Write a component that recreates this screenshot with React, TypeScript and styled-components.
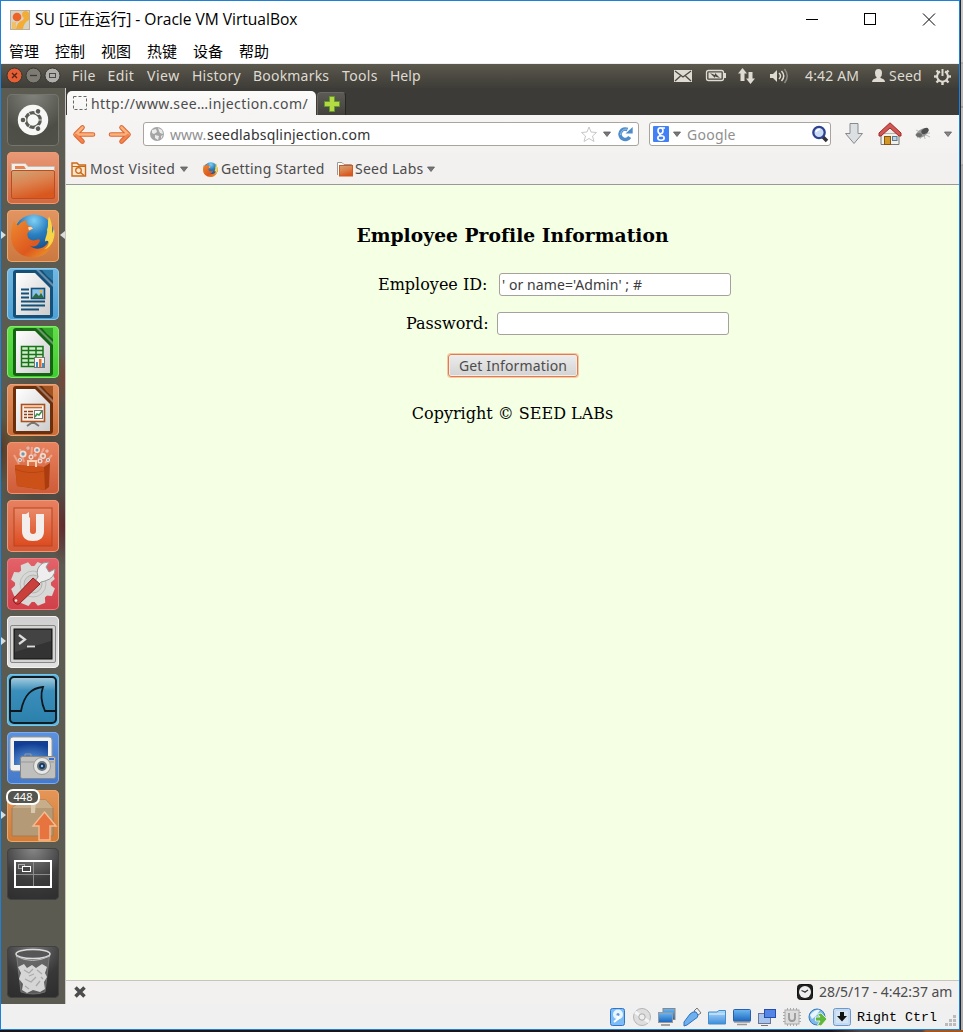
import React from "react";
import styled, { createGlobalStyle } from "styled-components";

const UI = '"Noto Sans", "Open Sans", sans-serif';

const Global = createGlobalStyle`
  * { box-sizing: border-box; }
  html, body { margin: 0; padding: 0; }
  body { width: 963px; height: 1032px; overflow: hidden; background: #17151b; }
  svg { display: block; flex: none; overflow: visible; }
`;

const Desktop = styled.div`
  display: flex;
  width: 963px;
  height: 1032px;
  background: linear-gradient(90deg, #18151a 0 830px, #4a4548 860px 922px, #a4561f 926px);
`;
const Window = styled.div`
  display: flex;
  flex-direction: column;
  width: 960px;
  height: 1030px;
  border: 1px solid #1c81d8;
  background: #fff;
`;
const Behind = styled.div`
  width: 3px;
  height: 1030px;
  border-left: 1px solid #25252b;
  background: linear-gradient(#c8c8c8 0 62px, #999 63px, #b9b9b9 64px 106px, #888 107px, #c0c0c0 108px 164px, #999 165px, #b0b0b0 166px);
`;

const TitleBar = styled.div`
  display: flex;
  align-items: center;
  height: 37px;
  padding-left: 9px;
  color: #000;
`;
const Caption = styled.span`
  margin: 0 0 3px 5px;
  width: 737px;
  white-space: nowrap;
  font-family: "Open Sans", "Noto Sans CJK SC", sans-serif;
  font-size: 15.6px;
  letter-spacing: -0.03px;
`;
const HostMenu = styled.div`
  display: flex;
  height: 26px;
  padding-left: 8px;
  border-bottom: 1px solid #eee;
`;
const HostMenuItem = styled.span`
  width: 46px;
  font: 15px/25px "Noto Sans CJK SC", sans-serif;
  color: #000;
  white-space: nowrap;
`;

const Txt = styled.span<{ $w: number; $ls?: number; $color?: string; $drop?: number }>`
  flex: none;
  width: ${(p) => p.$w}px;
  padding-top: ${(p) => p.$drop ?? 0}px;
  white-space: pre;
  font-family: ${UI};
  font-size: 14px;
  line-height: 20px;
  letter-spacing: ${(p) => p.$ls ?? 0}px;
  color: ${(p) => p.$color ?? "#4c4c4c"};
`;
const Gap = styled.span<{ $w: number }>`
  flex: none;
  width: ${(p) => p.$w}px;
`;

const TopPanel = styled.div`
  display: flex;
  align-items: center;
  height: 24px;
  padding-left: 5px;
  background: linear-gradient(#5c594e, #4a4840 55%, #3e3d38);
`;
const Guest = styled.div`
  display: flex;
  height: 916px;
`;
const Launcher = styled.div`
  display: flex;
  flex-direction: column;
  gap: 6px;
  width: 64px;
  padding: 6px 0 6px 6px;
  background:
    radial-gradient(ellipse 12px 34px at 0 362px, #542c1aaa, transparent),
    radial-gradient(ellipse 10px 30px at 64px 292px, #83402acc, transparent),
    radial-gradient(ellipse 16px 40px at 64px 438px, #651e22cc, transparent),
    radial-gradient(ellipse 40px 60px at 20px 350px, #6d582caa, transparent),
    radial-gradient(ellipse 50px 110px at 40px 370px, #45413c, transparent),
    #5b5b51;
`;
const Tile = styled.div<{ $bg: string; $edge: string; $bottom?: boolean }>`
  position: relative;
  flex: none;
  width: 52px;
  height: 52px;
  margin-top: ${(p) => (p.$bottom ? "auto" : "0")};
  border-radius: 5px;
  background: ${(p) => p.$bg};
  box-shadow: inset 0 0 0 1px ${(p) => p.$edge};
`;
const Pip = styled.span<{ $right?: boolean }>`
  position: absolute;
  top: 21px;
  ${(p) => (p.$right ? "right: -6px; border-right" : "left: -6px; border-left")}: 5px solid #dcdcd8;
  border-top: 4px solid transparent;
  border-bottom: 4px solid transparent;
`;
const Count = styled.span`
  position: absolute;
  left: -1px;
  top: -1px;
  width: 34px;
  height: 16px;
  border: 2px solid #fff;
  border-radius: 7px;
  background: #55554f;
  color: #fff;
  font: 11px/12px ${UI};
  text-align: center;
`;

const Browser = styled.div`
  display: flex;
  flex-direction: column;
  width: 894px;
  border-left: 1px solid #c9c7c2;
`;
const TabStrip = styled.div`
  display: flex;
  align-items: flex-end;
  height: 27px;
  padding-left: 1px;
  background: #3c3b37;
`;
const Tab = styled.div`
  display: flex;
  align-items: center;
  width: 249px;
  height: 24px;
  padding-left: 6px;
  border-radius: 5px 5px 0 0;
  background: linear-gradient(#fbfbfa, #f5f4f3);
`;
const NewTab = styled.div`
  display: flex;
  align-items: center;
  justify-content: center;
  width: 29px;
  height: 23px;
  margin-left: 1px;
  border: 1px solid #6a6964;
  border-right-color: #272622;
  border-bottom: 0;
  border-radius: 4px 4px 0 0;
  background: linear-gradient(#5b5a55, #42413c);
`;
const NavBar = styled.div`
  display: flex;
  align-items: center;
  height: 38px;
  padding-left: 6px;
  background: linear-gradient(#f6f5f4, #f3f2f0);
`;
const Field = styled.div<{ $w: number; $pad?: number }>`
  display: flex;
  align-items: center;
  width: ${(p) => p.$w}px;
  height: 24px;
  padding-left: ${(p) => p.$pad ?? 5}px;
  border: 1px solid #a8a49e;
  border-radius: 3px;
  background: #fff;
`;
const Bookmarks = styled.div`
  display: flex;
  align-items: center;
  height: 32px;
  padding: 1px 0 0 5px;
  border-bottom: 1px solid #999;
  background: #f2f1f0;
`;
const Page = styled.div`
  height: 795px;
  padding-top: 36px;
  background: #f4ffe4;
  font: 16px/20px "DejaVu Serif", serif;
  color: #000;
`;
const Heading = styled.h3`
  margin: 0 0 24px;
  height: 28px;
  line-height: 28px;
  font-size: 18.72px;
  letter-spacing: 0.03px;
  text-align: center;
`;
const FormRow = styled.div<{ $left: number }>`
  display: flex;
  align-items: center;
  height: 23px;
  margin: 0 0 16px ${(p) => p.$left}px;
`;
const Label = styled.label<{ $w: number }>`
  width: ${(p) => p.$w}px;
  white-space: nowrap;
`;
const Input = styled.input`
  width: 232px;
  height: 23px;
  padding: 0 2px;
  border: 1px solid #a5a19c;
  border-radius: 3px;
  outline: 0;
  background: #fff;
  color: #3c3c3c;
  font: 14px ${UI};
  letter-spacing: 0.08px;
`;
const Submit = styled.button`
  display: block;
  width: 130px;
  height: 23px;
  margin: 19px 0 0 382px;
  padding: 0;
  border: 1px solid #e07c50;
  border-radius: 3px;
  box-shadow: 0 0 0 1px #f6c9a4, inset 0 0 0 1px #f4eeea;
  background: linear-gradient(#ececec, #d3d3d3);
  color: #4c4c4c;
  font: 14px/20px ${UI};
  letter-spacing: 0.14px;
`;
const Copyright = styled.p`
  margin: 27px 0 0;
  text-align: center;
`;
const AddonBar = styled.div`
  display: flex;
  align-items: center;
  height: 24px;
  padding: 0 0 1px 8px;
  border-top: 1px solid #c8c5c0;
  background: #f2f1f0;
`;
const HostStatus = styled.div`
  display: flex;
  align-items: center;
  flex: 1;
  padding-left: 608px;
  background: #f0f0f0;
`;
const HostKey = styled.span`
  width: 88px;
  padding: 2px 0 0 5px;
  font: 13.33px "Liberation Mono", monospace;
  color: #000;
  white-space: pre;
`;

const Caret = ({ c = "#777" }: { c?: string }) => (
  <svg width="8" height="6"><path d="M.5 1H7.500L4 5.500Z" fill={c} stroke="#5c5c5c" strokeWidth=".8" /></svg>
);

const Defs = () => (
  <svg width="0" height="0" style={{ position: "absolute" }}>
    <defs>
      <linearGradient id="paper" x2="1" y2="1"><stop stopColor="#fff" /><stop offset="1" stopColor="#ccc" /></linearGradient>
      <linearGradient id="folder" x1="0" y1="0" x2=".4" y2="1"><stop stopColor="#cfa678" /><stop offset=".5" stopColor="#dc8350" /><stop offset="1" stopColor="#d9581f" /></linearGradient>
      <linearGradient id="ub" x2="0" y2="1"><stop stopColor="#e98a6a" /><stop offset="1" stopColor="#dd4a1e" /></linearGradient>
      <linearGradient id="fin" x2="0" y2="1"><stop stopColor="#a9cfe0" /><stop offset=".3" stopColor="#3a8ebb" /><stop offset="1" stopColor="#2a80ab" /></linearGradient>
      <radialGradient id="globe" cx=".5" cy=".15" r=".9"><stop stopColor="#7fd0f4" /><stop offset=".4" stopColor="#2a7fc0" /><stop offset="1" stopColor="#123a75" /></radialGradient>
      <linearGradient id="fox" x2="1" y2="1"><stop stopColor="#ee8a30" /><stop offset=".6" stopColor="#dd581e" /><stop offset="1" stopColor="#f0a52e" /></linearGradient>
      <linearGradient id="screen" x2="0" y2="1"><stop stopColor="#6db8f2" /><stop offset="1" stopColor="#1b65bd" /></linearGradient>
      <radialGradient id="scr2" cx=".5" cy="1" r=".9"><stop stopColor="#72aeea" /><stop offset="1" stopColor="#123f95" /></radialGradient>
      <linearGradient id="blueglass" x2="0" y2="1"><stop stopColor="#b5dcfa" /><stop offset="1" stopColor="#3d8ddd" /></linearGradient>
    </defs>
  </svg>
);

const Fox = ({ s }: { s: number }) => (
  <svg width={s} height={s} viewBox="0 0 44 44">
    <circle cx="23" cy="21" r="20" fill="url(#globe)" />
    <path d="M3 7C4 9 5 11 7 12C10 8 13 7 16 7C15 9 16 11 17 12Q20 12 22 15L18 18C16 19 16 21 17 24C20 28 24 27 27 26C28 25 30 27 28 29C26 33 22 34 19 32C25 38 35 35 38 27C40 22 42 20 43 24C41 37 33 44 22 44C10 44 0 36 0 23C0 17 1 11 3 7Z" fill="url(#fox)" />
    <path d="M38 3C36 8 38 12 36 16C37 20 34 24 34 28C38 25 40 31 33 36C41 34 45 24 43 15L41 20C42 13 40 7 38 3Z" fill="#f6d548" />
    <path d="M17 14Q20 12 22 15L18 17Z" fill="#f6dcc0" />
  </svg>
);

const OfficeDoc = ({ dark, fold, children }: { dark: string; fold: string; children: React.ReactNode }) => (
  <svg width="52" height="52">
    <path d="M9 2H46V47Q46 50 43 50H9Q6 50 6 47V5Q6 2 9 2Z" fill={dark} />
    <path d="M35 2H46V13Q40 9 35 2Z" fill={fold} />
    <path d="M29 2L46 19V16L32 2Z" fill="#fff" opacity=".35" />
    <path d="M9 5H28L43 20V47H9Z" fill="url(#paper)" />
    {children}
  </svg>
);

const gear = Array.from({ length: 8 }, (_, i) => i * 45);

const Dock = () => (
  <Launcher>
    <Tile $bg="radial-gradient(circle at 50% 0, #82837c, #4d4e46 65%, #505149)" $edge="#74756d">
      <svg width="52" height="52">
        <circle cx="26" cy="26" r="15.200" fill="#f7f7f6" />
        <circle cx="26" cy="26" r="7.300" fill="none" stroke="#5a5b54" strokeWidth="3.200" />
        {[60, 180, 300].map((a) => (
          <g key={a} transform={`rotate(${a} 26 26)`}>
            <circle cx="36" cy="26" r="3.400" fill="#f7f7f6" />
            <circle cx="36" cy="26" r="2.300" fill="#5a5b54" />
          </g>
        ))}
        {[0, 120, 240].map((a) => <path key={a} transform={`rotate(${a} 26 26)`} d="M31 26H35.500" stroke="#f7f7f6" strokeWidth=".8" />)}
      </svg>
    </Tile>
    <Tile $bg="linear-gradient(#e99977, #d2683f)" $edge="#f09a70">
      <svg width="52" height="52">
        <path d="M4.500 19V11.500H18.500L21 14.500H47.500V19Z" fill="#f2eeea" stroke="#c9bab0" />
        <path d="M8 14H17L19 17H8Z" fill="#e8824e" />
        <rect x="4.500" y="18.500" width="43" height="28" rx="1.500" fill="url(#folder)" stroke="#bd4d20" />
      </svg>
    </Tile>
    <Tile $bg="linear-gradient(#e29562, #cb783f)" $edge="#eda66c">
      <svg width="52" height="52"><g transform="translate(4 3.500)"><Fox s={44} /></g></svg>
      <Pip /><Pip $right />
    </Tile>
    <Tile $bg="linear-gradient(#73b8e2, #4ca0d6)" $edge="#8dcbed">
      <OfficeDoc dark="#165079" fold="#2d79a6">
        <path d="M14 21.500H22M14 25.500H22M14 29.500H22M14 33.500H38M14 37.500H38M14 41.500H32" stroke="#145078" strokeWidth="2" />
        <rect x="24.500" y="20.500" width="13" height="10" fill="#8bc4ea" stroke="#145078" strokeWidth="1.600" />
        <path d="M25 30L29 25L32 28L34 25L37 30Z" fill="#2b6a45" /><circle cx="34" cy="23.500" r="1.500" fill="#f3b33c" />
      </OfficeDoc>
    </Tile>
    <Tile $bg="linear-gradient(#62df49, #42ca32)" $edge="#7eef64">
      <OfficeDoc dark="#156414" fold="#35a32b">
        <path d="M14.500 20.500H36V40.500H14.500ZM14.500 24.500H36M14.500 28.500H36M14.500 32.500H36M14.500 36.500H36M21.500 20.500V40.500M29 20.500V40.500" stroke="#197419" strokeWidth="1.500" fill="#d1edcb" />
        <rect x="27.500" y="31.500" width="10" height="10" fill="#f4f4f4" stroke="#777" />
        <path d="M29 41V36H31V41ZM35 41V37H37V41Z" fill="#358fc7" /><path d="M32 41V33H34.500V41Z" fill="#ec6a28" />
      </OfficeDoc>
    </Tile>
    <Tile $bg="linear-gradient(#e39060, #c96d38)" $edge="#eda278">
      <OfficeDoc dark="#6c2f0c" fold="#a35423">
        <path d="M26 37V40M20 42L26 38L32 42" stroke="#777" fill="none" strokeWidth="2" />
        <rect x="14.500" y="20.500" width="23" height="17" fill="#f9efe8" stroke="#a9501c" strokeWidth="1.600" />
        <path d="M17 23.500H35" stroke="#c46b34" strokeWidth="1.600" />
        <path d="M17 27.500H20M17 30.500H20M17 33.500H20M21 27.500H26M21 30.500H26M21 33.500H26" stroke="#8e4019" strokeWidth="1.600" />
        <rect x="27.500" y="26.500" width="8" height="8" fill="#fff" stroke="#777" /><path d="M28 33L30 30L32 31L35 27" stroke="#369043" fill="none" strokeWidth="1.500" />
      </OfficeDoc>
    </Tile>
    <Tile $bg="linear-gradient(#e8835f, #ce5b38)" $edge="#ed9574">
      <svg width="52" height="52">
        <path d="M12 22L7 13M17 20L13 7M24 18L25 5M31 19L37 6M38 21L45 13" stroke="#f7cdbd" strokeWidth="2" opacity=".5" />
        {[[16, 12, 3.500], [24, 15, 2.500], [30, 8, 3], [36, 14, 3], [13, 18, 2], [33, 19, 2.500], [21, 6, 1.500], [40, 9, 1.500], [41, 18, 2], [28, 13, 1.500]].map(([x, y, r], i) => (
          <g key={i}><circle cx={x} cy={y} r={r} fill="#f0dfd8" /><circle cx={x} cy={y} r={r / 2} fill={i % 2 ? "#c88670" : "#7597ad"} /></g>
        ))}
        <path d="M8 23L37 25L43 21L42 45L38 48L10 44Z" fill="#aa3c10" />
        <path d="M8 23L37 25L38 48L10 44Z" fill="#cc5118" />
        <path d="M21 24V19H29V25" stroke="#fad0ae" fill="none" strokeWidth="2" /><path d="M8 27Q21 33 37 29" stroke="#b84612" fill="none" />
      </svg>
    </Tile>
    <Tile $bg="linear-gradient(#e8805f, #d65734)" $edge="#ee9a77">
      <svg width="52" height="52">
        <rect x="7" y="8" width="38" height="38" fill="url(#ub)" stroke="#b84520" />
        <path d="M15 14H19L22 12V17L23 18V31Q23 34 26 34Q29 34 29 31V14H37V31Q37 41 26 41Q15 41 15 31Z" fill="#f3eeeb" />
      </svg>
    </Tile>
    <Tile $bg="linear-gradient(#e4636a, #d03f48)" $edge="#ec7a7e">
      <svg width="52" height="52">
        <g fill="#d8d8d6">
          {gear.map((a) => <path key={a} transform={`rotate(${a + 22} 26 26)`} d="M20 10L22 4H30L32 10Z" />)}
          <circle cx="26" cy="26" r="18" />
        </g>
        <circle cx="26" cy="26" r="13" fill="none" stroke="#bdbdbb" /><circle cx="26" cy="26" r="9" fill="#cfcfcd" stroke="#b3b3b1" />
        <path d="M28 23L31 19Q28 10 36 5L42 4L39 9L42 14L48 11Q48 20 38 23L34 24L31 27Z" fill="#eee" stroke="#999" />
        <path d="M26 20L33 26L12 46Q7 47 6 41Z" fill="#c9403c" stroke="#8d2020" /><circle cx="9" cy="42.500" r="1.300" fill="#eee" />
      </svg>
    </Tile>
    <Tile $bg="linear-gradient(#cfcfcf, #e2e2e2)" $edge="#f3f3f3">
      <svg width="52" height="52">
        <rect x="3.500" y="9.500" width="45" height="37" rx="1.500" fill="#d3d3d1" stroke="#888" />
        <rect x="7" y="13" width="38" height="30" fill="#333" stroke="#111" />
        <path d="M8 14H44V25L8 36Z" fill="#fff" opacity=".08" />
        <path d="M12 19L18 23.500L12 28" stroke="#ddd" strokeWidth="2.200" fill="none" /><path d="M20 30.500H28" stroke="#ddd" strokeWidth="1.800" />
      </svg>
      <Pip />
    </Tile>
    <Tile $bg="#5cb3dd" $edge="#73c7ed">
      <svg width="52" height="52">
        <rect x="3" y="3" width="46" height="46" rx="4" fill="url(#fin)" stroke="#101b22" strokeWidth="2" />
        <path d="M3 37H14C17 21 24 14 36 13C33 21 34 28 38 37H49" fill="none" stroke="#0d171d" strokeWidth="1.800" />
      </svg>
    </Tile>
    <Tile $bg="linear-gradient(#5b91dd, #4579cb)" $edge="#7cadf0">
      <svg width="52" height="52">
        <rect x="3" y="5" width="42" height="34" rx="3" fill="#f2f2f0" stroke="#999" /><rect x="7" y="9" width="34" height="24" fill="url(#scr2)" />
        <rect x="13.500" y="24.500" width="35" height="22" rx="2" fill="#bfbfbd" stroke="#888" /><path d="M18 24V22H24V24M14 30H47" stroke="#999" fill="none" />
        <circle cx="35" cy="34" r="8.500" fill="#e7e7e5" stroke="#999" /><circle cx="35" cy="34" r="5" fill="#6a747c" /><circle cx="35" cy="34" r="3" fill="#17375f" /><circle cx="35" cy="34" r="1.200" fill="#9bc8f4" />
        <rect x="42" y="26" width="5" height="2" fill="#396dca" />
      </svg>
    </Tile>
    <Tile $bg="linear-gradient(#e59658, #d17c37)" $edge="#f0a868">
      <svg width="52" height="52">
        <path d="M5 18L16 10H39L46 18V46H5Z" fill="#b59a78" stroke="#a37d52" /><path d="M5 18L16 10H39L46 18Z" fill="#c7ad89" /><path d="M24 10H29L28 23H24Z" fill="#d9c9ac" />
        <path d="M37.500 22L49 36H43V50H32V36H26Z" fill="#e7743e" stroke="#f4bd91" strokeWidth="1.400" />
      </svg>
      <Count>448</Count><Pip />
    </Tile>
    <Tile $bg="radial-gradient(circle at 50% 0, #888, #3c3c3c 55%, #2d2d2d)" $edge="#424242">
      <svg width="52" height="52">
        <rect x="8" y="13" width="36" height="26" fill="none" stroke="#fff" strokeWidth="2" /><path d="M26.500 14V38M9 26.500H43" stroke="#8c8c8c" />
        <rect x="11.500" y="16.500" width="6" height="4" fill="none" stroke="#aaa" /><rect x="15.500" y="18.500" width="8" height="5" fill="#444" stroke="#fff" />
      </svg>
    </Tile>
    <Tile $bg="radial-gradient(circle at 50% 0, #777, #383838 55%, #2c2c2c)" $edge="#424242" $bottom>
      <svg width="52" height="52">
        <path d="M9.500 9L14 46Q26 50 38 46L42.500 9Z" fill="#6e6e6e" opacity=".7" stroke="#999" strokeWidth=".8" />
        <path d="M11 21L17 18L20 22L25 19L29 22L35 18L40 21L38 27L40 31L37 36L38 43L33 46L26 44L20 47L15 44L16 38L12 33L14 27Z" fill="#d6d6d6" />
        <path d="M17 24L22 27L26 23M30 24L35 28M18 33L24 36L29 31M33 35L29 40M18 40L22 43M22 30L27 28M34 31L36 33" stroke="#a9a9a9" fill="none" strokeWidth="1.300" />
        <ellipse cx="26" cy="8" rx="17" ry="4.500" fill="#565656" stroke="#dcdcdc" strokeWidth="1.500" /><path d="M9 10Q25 19 43 10" stroke="#bbb" fill="none" />
      </svg>
    </Tile>
  </Launcher>
);

const panelInk = "#dfdbd2";
const Panel = () => (
  <TopPanel>
    <svg width="55" height="18">
      <circle cx="8.500" cy="8.500" r="7.500" fill="#e65f35" stroke="#37362f" /><path d="M6 6L11 11M11 6L6 11" stroke="#56251a" strokeWidth="1.300" />
      <circle cx="27.500" cy="8.500" r="7.500" fill="#7d7b73" stroke="#37362f" /><path d="M24 8.500H31" stroke="#3a3933" strokeWidth="1.300" />
      <circle cx="46.500" cy="8.500" r="7.500" fill="#b0afab" stroke="#37362f" /><rect x="43.500" y="6.500" width="6" height="4" fill="none" stroke="#4a4943" />
    </svg>
    <Gap $w={11} />
    <Txt $w={35.5} $ls={0.3} $color={panelInk}>File</Txt><Txt $w={39.5} $ls={0.4} $color={panelInk}>Edit</Txt>
    <Txt $w={45} $ls={0.5} $color={panelInk}>View</Txt><Txt $w={61} $ls={0.25} $color={panelInk}>History</Txt>
    <Txt $w={89} $ls={0.2} $color={panelInk}>Bookmarks</Txt><Txt $w={48} $ls={0.35} $color={panelInk}>Tools</Txt><Txt $w={284} $color={panelInk}>Help</Txt>
    <svg width="131" height="20">
      <rect x="0" y="4" width="18" height="12" fill={panelInk} /><path d="M1 5L9 11L17 5M1 15L6.500 10M17 15L11.500 10" stroke="#4a4840" fill="none" strokeWidth="1.300" />
      <rect x="32.500" y="4.500" width="17" height="10" rx="2" fill="none" stroke={panelInk} strokeWidth="1.300" /><path d="M51 7V12" stroke={panelInk} strokeWidth="2" /><rect x="34.500" y="6.500" width="13" height="6" fill={panelInk} /><path d="M36 7L41 9V7L46 12L41 10.500V12Z" fill="#4a4840" />
      <path d="M68.500 2L73 7.500H70.500V15H66.500V7.500H64ZM76.500 18L72 12.500H74.500V6H78.500V12.500H81Z" fill={panelInk} />
      <path d="M96 8H99L103 4V16L99 12H96Z" fill={panelInk} /><path d="M105 7Q108 10 105 13M107.500 5Q112 10 107.500 15" stroke={panelInk} fill="none" strokeWidth="1.500" /><path d="M110.500 3Q116 10 110.500 17" stroke="#8d8a82" fill="none" strokeWidth="1.500" />
    </svg>
    <Txt $w={66} $ls={0.15} $color={panelInk}>4:42 AM</Txt>
    <svg width="18" height="16"><path d="M4 5Q4 1 7.500 1Q11 1 11 5Q11 8 9.500 9V10Q14 11 14 14H1Q1 11 5.500 10V9Q4 8 4 5Z" fill={panelInk} /></svg>
    <Txt $w={44.5} $ls={0.2} $color={panelInk}>Seed</Txt>
    <svg width="17" height="17" viewBox="0 0 17 17">
      <path d="M11 3.500A5.400 5.400 0 1 1 6 3.500" stroke={panelInk} fill="none" strokeWidth="2" /><path d="M8.500 1V8" stroke={panelInk} strokeWidth="2" />
      {[45, 90, 135, 180, 225, 270, 315].map((a) => <path key={a} transform={`rotate(${a} 8.500 8.500)`} d="M7.300 3V0H9.700V3Z" fill={panelInk} />)}
    </svg>
  </TopPanel>
);

const BackArrow = ({ flip }: { flip?: boolean }) => (
  <svg width="24" height="20" viewBox="0 0 24 20">
    <g transform={flip ? "translate(24 0) scale(-1 1)" : undefined} fill="none" strokeLinecap="round" strokeLinejoin="round">
      <path d="M10.500 3.500L3.500 10.500L10.500 17.500M4.500 10.500H21" stroke="#dd6632" strokeWidth="4.600" />
      <path d="M10.500 3.500L3.500 10.500H21" stroke="#f9b27c" strokeWidth="2.600" />
      <path d="M4 11L10.500 17.500" stroke="#f28450" strokeWidth="2.600" />
    </g>
  </svg>
);

const Firefox = () => (
  <Browser>
    <TabStrip>
      <Tab>
        <svg width="18" height="16"><rect x=".5" y="1.500" width="13" height="13" fill="none" stroke="#666" strokeDasharray="3 2" /></svg>
        <Txt $w={220} $ls={0.42} $drop={1}>http://www.see…injection.com/</Txt>
      </Tab>
      <NewTab><svg width="16" height="16"><path d="M5.500 .5H10.500V5.500H15.500V10.500H10.500V15.500H5.500V10.500H.5V5.500H5.500Z" fill="#b4da42" stroke="#65982d" /></svg></NewTab>
    </TabStrip>
    <NavBar>
      <BackArrow /><Gap $w={12} /><BackArrow flip /><Gap $w={11} />
      <Field $w={496}>
        <svg width="21" height="16"><circle cx="8" cy="8" r="7" fill="#a5a5a5" /><path d="M3 4L7 3L8 6L5 8L3 7ZM9 2L13 4L14 8L11 7L10 5ZM6 9L10 10L9 14L6 12ZM12 10L14 9L12 13Z" fill="#ececec" /></svg>
        <Txt $w={37} $color="#909090" $drop={2}>www.</Txt><Txt $w={374} $ls={0.22} $color="#333" $drop={2}>seedlabsqlinjection.com</Txt>
        <svg width="22" height="17"><path d="M8 1L10 6L15.500 6.500L11.500 10L13 15.500L8 12.500L3 15.500L4.500 10L.5 6.500L6 6Z" fill="#fff" stroke="#c8c8c8" /></svg>
        <Caret /><Gap $w={6} />
        <svg width="17" height="17"><path d="M12.700 11A5.200 5.200 0 1 1 10.500 3.500" stroke="#4f8ccb" strokeWidth="3.600" fill="none" /><path d="M8.500 7.500H15.700V1Z" fill="#4f8ccb" /><path d="M3.500 9Q4 3 10 3" fill="none" stroke="#97c2e9" /></svg>
      </Field>
      <Gap $w={10} />
      <Field $w={182} $pad={3}>
        <svg width="20" height="16"><rect width="16" height="16" rx="1" fill="#4380f6" /><g stroke="#fff" fill="none" strokeWidth="1.600"><ellipse cx="7.500" cy="4.800" rx="2.500" ry="2.900" /><path d="M9 2H12M8 7.500Q5 9 8.500 10" /><ellipse cx="8" cy="12" rx="3.200" ry="2.200" /></g></svg>
        <Caret /><Gap $w={6} />
        <Txt $w={124} $ls={0.25} $color="#8f8f8f" $drop={2}>Google</Txt>
        <svg width="18" height="18"><path d="M12 12L16 16" stroke="#333" strokeWidth="3.500" /><circle cx="8" cy="7.500" r="5.700" fill="#cbdcf4" stroke="#2e438e" strokeWidth="2.300" /><path d="M5 7Q6 4 9 4.500" stroke="#fff" fill="none" strokeWidth="1.500" /></svg>
      </Field>
      <Gap $w={13} />
      <svg width="20" height="24"><path d="M6 1.500H14V11.500H18.500L10 21.500L1.500 11.500H6Z" fill="#dce0e2" stroke="#858b8e" /></svg>
      <Gap $w={14} />
      <svg width="24" height="24"><path d="M4 11H21V22.500H3V11Z" fill="#f1f1ec" stroke="#777" /><path d="M12 2L21 11H3Z" fill="#ecece8" /><rect x="6.500" y="14.500" width="6" height="8" fill="#d29627" stroke="#89540f" /><rect x="14.500" y="14.500" width="4.500" height="4" fill="#bcd4e4" stroke="#5d7790" /><path d="M12 .8L23 11V14H21L12 6L3 14H1V11Z" fill="#d15757" stroke="#a32626" /></svg>
      <Gap $w={12} />
      <svg width="18" height="16"><g stroke="#aaa" strokeWidth=".8"><path d="M2 4L16 11M1 9L16 7M6 13L11 3M3 12L14 3M11 13L9 3" /></g><path d="M2 8Q5 3 11 2Q15 2 14 6Q12 11 5 12Z" fill="#999" /><ellipse cx="11" cy="5" rx="4" ry="2.500" transform="rotate(-30 11 5)" fill="#4f4f4f" /><ellipse cx="5" cy="9" rx="3" ry="2" fill="#6d6d6d" /></svg>
      <Gap $w={12} /><Caret c="#888" />
    </NavBar>
    <Bookmarks>
      <svg width="19" height="16"><path d="M1 15V2H6L8 4H14.500V15Z" fill="#fae6cf" stroke="#c96a18" strokeWidth="1.400" /><path d="M1 5.500H15" stroke="#c96a18" /><circle cx="7.500" cy="9.500" r="2.800" fill="none" stroke="#c96a18" strokeWidth="1.300" /><path d="M9.500 11.500L13 14.500" stroke="#c96a18" strokeWidth="1.500" /></svg>
      <Txt $w={89.5} $ls={0.4}>Most Visited</Txt><Caret /><Gap $w={15.5} />
      <Fox s={15} /><Gap $w={3} />
      <Txt $w={116} $ls={0.2}>Getting Started</Txt>
      <svg width="18" height="16"><path d="M.5 14V1.500H5L7 3.500H14.500V6" fill="#fff" stroke="#999" /><rect x="2.500" y="4.500" width="13" height="10.500" fill="url(#folder)" stroke="#d05b20" /></svg>
      <Txt $w={72} $ls={0.25}>Seed Labs</Txt><Caret />
    </Bookmarks>
    <Page>
      <Heading>Employee Profile Information</Heading>
      <FormRow $left={312}><Label $w={121}>Employee ID:</Label><Input defaultValue="' or name='Admin' ; #" /></FormRow>
      <FormRow $left={340}><Label $w={91}>Password:</Label><Input type="password" /></FormRow>
      <Submit>Get Information</Submit>
      <Copyright>Copyright © SEED LABs</Copyright>
    </Page>
    <AddonBar>
      <svg width="723" height="12"><path d="M1.500 1.500L10.500 10.500M10.500 1.500L1.500 10.500" stroke="#4c4c4c" strokeWidth="3.500" /></svg>
      <svg width="22" height="16"><rect x=".5" y=".5" width="15" height="15" rx="3" fill="#222" stroke="#111" /><circle cx="8" cy="8" r="6" fill="#eee" /><path d="M4.500 6.500L8 8L11 6M8 8L8 9" stroke="#333" fill="none" strokeWidth="1.200" /></svg>
      <Txt $w={134} $ls={-0.05}>28/5/17 - 4:42:37 am</Txt>
    </AddonBar>
  </Browser>
);

const StatusIcons = () => (
  <svg width="243" height="20">
    <g transform="translate(1 1)"><rect x=".5" y=".5" width="14" height="17" rx="2" fill="#7dbcf5" stroke="#2e76c8" /><circle cx="8" cy="6.500" r="5" fill="#e8f4ff" /><circle cx="8" cy="6.500" r="1.500" fill="#5c99d8" /><path d="M4 14L9 10L7 8" stroke="#fff" fill="none" strokeWidth="2" /></g>
    <g transform="translate(24 1)"><circle cx="9" cy="9" r="8.500" fill="#dedede" stroke="#b5b5b5" /><path d="M9 9L2 4M9 9L16 14" stroke="#f5f5f5" strokeWidth="3" /><circle cx="9" cy="9" r="3.200" fill="#eee" stroke="#aaa" /></g>
    <g transform="translate(49 1)"><rect x="5" y=".5" width="12" height="11" fill="url(#screen)" stroke="#888" /><rect x=".5" y="4.500" width="14" height="10" fill="url(#screen)" stroke="#999" /><path d="M3 17H12" stroke="#888" strokeWidth="1.500" /></g>
    <g transform="translate(74 1)"><path d="M11 3L14 0L18 5L15 7Z" fill="#eee" stroke="#777" /><path d="M1 14L7 6Q10 3 13 4L15 7Q15 10 12 11L4 17L1 18Z" fill="#6eaff0" stroke="#2d72ba" /></g>
    <g transform="translate(99 2)"><path d="M.5 15V3H9L11 1.500H17.500V15Z" fill="url(#blueglass)" stroke="#428fce" /><path d="M1 5H17" stroke="#e0f2ff" /></g>
    <g transform="translate(124 1)"><rect x=".5" y="1.500" width="17" height="12" rx="1" fill="url(#screen)" stroke="#2a5fae" /><path d="M1 14H17M4 16.500H14" stroke="#999" strokeWidth="1.500" /></g>
    <g transform="translate(149 1)"><rect x=".5" y="5.500" width="12" height="10" fill="#a6c4ee" stroke="#6c7594" /><rect x="6.500" y="1.500" width="11" height="8" fill="#5584e7" stroke="#254fa8" /><path d="M3 17.500H10" stroke="#777" /></g>
    <g transform="translate(174 1)"><path d="M4.500 0V18M7.500 0V18M10.500 0V18M13.500 0V18M0 4.500H18M0 7.500H18M0 10.500H18M0 13.500H18" stroke="#aaa" /><rect x="2" y="2" width="14" height="14" fill="#ddd" stroke="#aaa" /><path d="M6 5V10Q6 13 9 13Q12 13 12 10V5" stroke="#999" fill="none" strokeWidth="1.800" /></g>
    <g transform="translate(199 1)"><circle cx="9" cy="9" r="8" fill="#7db9ec" stroke="#347bb9" /><path d="M2 7Q7 1 12 2L8 8L4 11ZM12 7L17 8L13 12Z" fill="#e7f4fc" /><path d="M7.500 9H12L9.500 6L13 5L19 11L13 18L9.500 17L12 13H7.500Z" fill="#62b83b" stroke="#f4faf0" strokeWidth=".8" /></g>
    <g transform="translate(224 0)"><rect x=".5" y="1.500" width="17" height="17" rx="2" fill="#c5daf0" stroke="#6c98cb" /><rect x="3" y="4" width="12" height="12" fill="#d3e4f5" /><path d="M7 5H11V9H14L9 14.500L4 9H7Z" fill="#111" /></g>
  </svg>
);

export default function App() {
  return (
    <Desktop>
      <Global />
      <Defs />
      <Window>
        <TitleBar>
          <svg width="20" height="20"><rect x=".5" y=".5" width="19" height="19" fill="#d8d2c4" stroke="#b9ae9b" /><path d="M6 19Q7 12 13 10L16 3L19 3V10Q14 12 13 19Z" fill="#f3ad35" /><path d="M2 12H6V19H2Z" fill="#f0c068" /><circle cx="7" cy="7" r="4.300" fill="#ee6425" /><circle cx="15.500" cy="4.500" r="3.500" fill="#f2ad38" /></svg>
          <Caption>SU [正在运行] - Oracle VM VirtualBox</Caption>
          <Gap $w={34} />
          <svg width="130" height="13"><g fill="none" stroke="#000"><path d="M0 6.500H12" /><rect x="58.500" y=".5" width="11" height="11" /><path d="M117 .5L129 12.500M129 .5L117 12.500" /></g></svg>
        </TitleBar>
        <HostMenu>{["管理", "控制", "视图", "热键", "设备", "帮助"].map((m) => <HostMenuItem key={m}>{m}</HostMenuItem>)}</HostMenu>
        <Panel />
        <Guest><Dock /><Firefox /></Guest>
        <HostStatus>
          <StatusIcons />
          <HostKey>Right Ctrl</HostKey>
          <svg width="12" height="14"><path d="M8 0h3v3h-3zM4 4h3v3h-3zM8 4h3v3h-3zM0 8h3v3h-3zM4 8h3v3h-3zM8 8h3v3h-3z" fill="#bbb" transform="translate(5 5)" /></svg>
        </HostStatus>
      </Window>
      <Behind />
    </Desktop>
  );
}
